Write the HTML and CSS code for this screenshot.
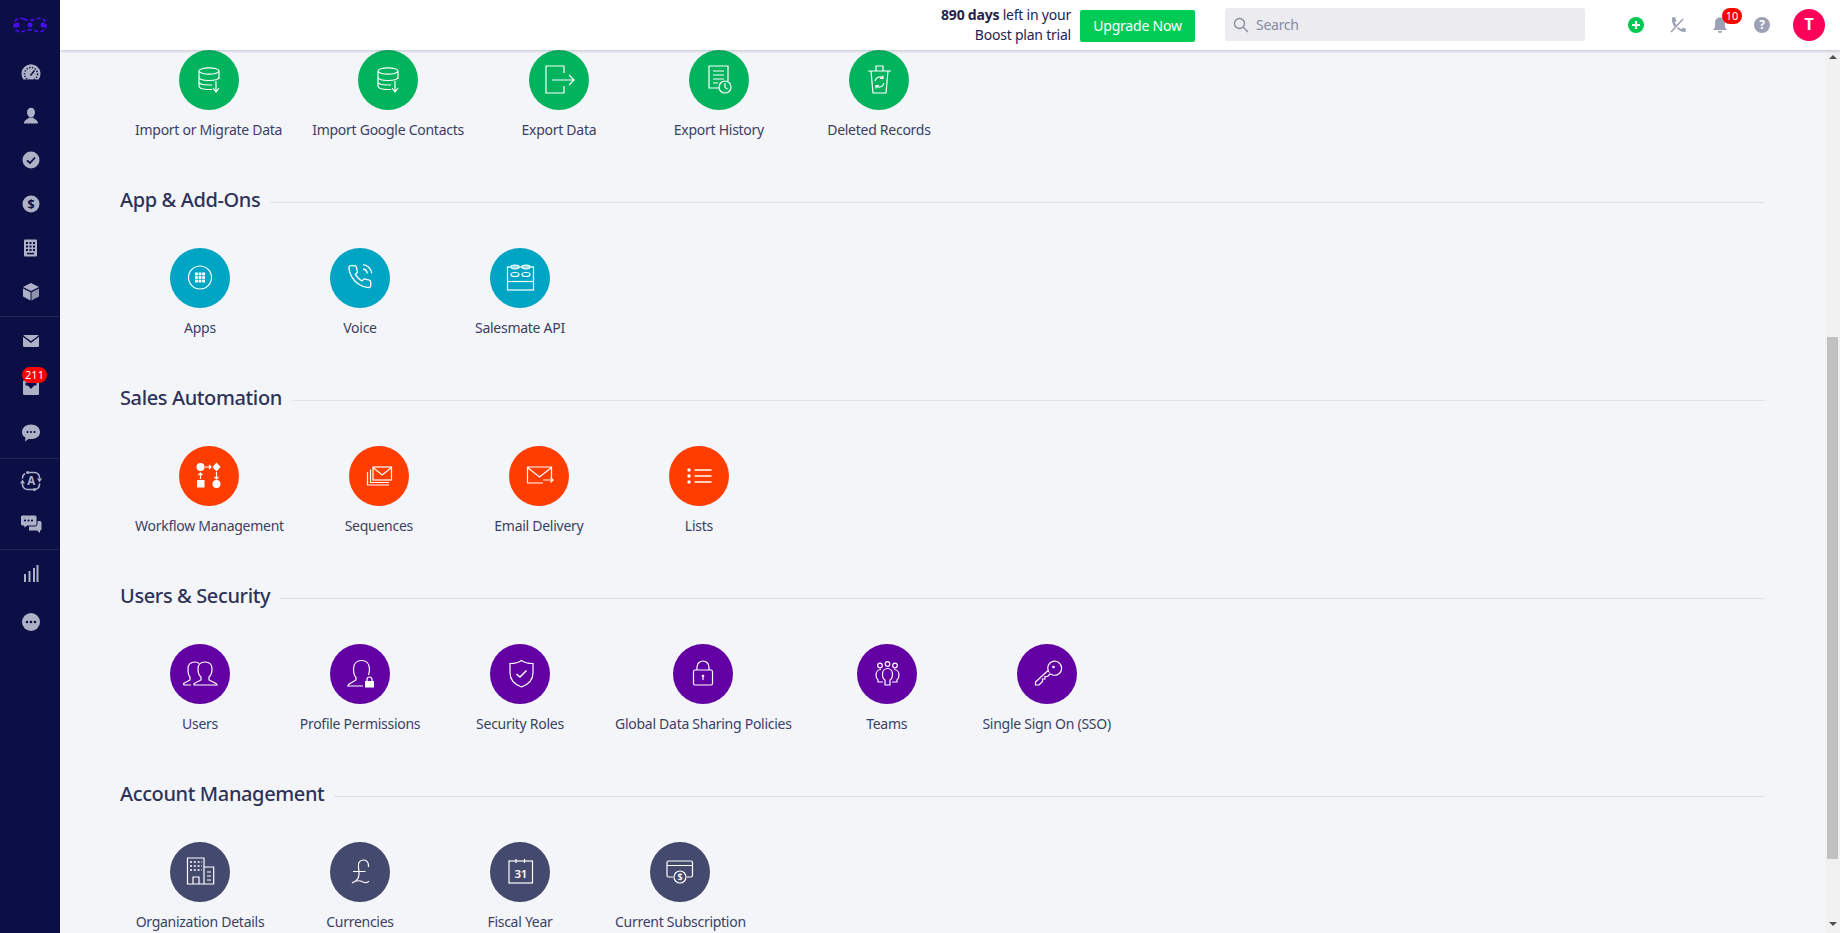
FILE: index.html
```html
<!DOCTYPE html>
<html lang="en">
<head>
    <meta charset="UTF-8">
    <meta name="viewport" content="width=device-width, initial-scale=1.0">
    <title>Setup</title>
    <link rel="stylesheet" href="styles.css">
</head>
<body>
<div class="app">

    <nav class="sidebar">
        <div class="logo">
            <svg width="36" height="20" viewBox="0 0 36 20"><g fill="none" stroke="#4a0df0" stroke-width="1.6" stroke-dasharray="4 2.4"><path d="M12 4 C7 2 2 4 2 10 C2 16 7 18 12 16 C15 14.5 21 14.5 24 16 C29 18 34 16 34 10 C34 4 29 2 24 4 C21 5.500 15 5.500 12 4 Z"/></g><g fill="#4a0df0"><circle cx="5" cy="10" r="2.500"/><circle cx="18" cy="10" r="2.500"/><circle cx="31" cy="10" r="2.500"/></g></svg>
        </div>
        <div class="side-group side-group-main">
            <a class="side-item"><svg width="24" height="24" viewBox="0 0 24 24"><path class="fl" d="M5.500 19.500 A9.500 9.500 0 1 1 20.500 19.500 Z"/><circle cx="13" cy="14" r="6.500" fill="none" stroke="#0c0f45" stroke-width="1.500" stroke-dasharray="1.300 1.500"/><path d="M12.500 15.500 L16.500 10.500" stroke="#0c0f45" stroke-width="1.500"/></svg></a>
            <a class="side-item"><svg width="24" height="24" viewBox="0 0 24 24"><ellipse class="fl" cx="13" cy="8.500" rx="4" ry="4.800"/><path class="fl" d="M6 19.500 C6 16 9.500 15.500 11 13.500 H15 C16.500 15.500 20 16 20 19.500 Z"/></svg></a>
            <a class="side-item"><svg width="24" height="24" viewBox="0 0 24 24"><circle class="fl" cx="13" cy="12" r="8.500"/><path d="M9 12.300 L12 15 L17 9.500" fill="none" stroke="#0c0f45" stroke-width="1.800"/></svg></a>
            <a class="side-item"><svg width="24" height="24" viewBox="0 0 24 24"><circle class="fl" cx="13" cy="12" r="8.500"/><text class="side-glyph" x="13" y="16.500" font-size="12.500">$</text></svg></a>
            <a class="side-item"><svg width="24" height="24" viewBox="0 0 24 24"><rect class="fl" x="6" y="3.500" width="13" height="17" rx="1"/><g fill="#0c0f45"><rect x="8" y="6" width="2" height="2"/><rect x="11.500" y="6" width="2" height="2"/><rect x="15" y="6" width="2" height="2"/><rect x="8" y="9.500" width="2" height="2"/><rect x="11.500" y="9.500" width="2" height="2"/><rect x="15" y="9.500" width="2" height="2"/><rect x="8" y="13" width="2" height="2"/><rect x="11.500" y="13" width="2" height="2"/><rect x="15" y="13" width="2" height="2"/><rect x="9" y="16.800" width="7" height="1.500"/></g></svg></a>
            <a class="side-item"><svg width="24" height="24" viewBox="0 0 24 24"><path class="fl" d="M13 3 L21 7 L13 11 L5 7 Z"/><path class="fl" d="M5 8.500 L12.500 12.300 V20.500 L5 16.500 Z"/><path d="M21 8.500 L13.500 12.300 V20.500 L21 16.500 Z" fill="#8d92ab"/></svg></a>
        </div>
        <div class="side-group side-group-inbox">
            <a class="side-item"><svg width="24" height="24" viewBox="0 0 24 24"><rect class="fl" x="5" y="6" width="16" height="12" rx="1.500"/><path d="M5 7 L13 13 L21 7" fill="none" stroke="#0c0f45" stroke-width="1.400"/></svg></a>
            <a class="side-item"><svg width="24" height="24" viewBox="0 0 24 24"><rect class="fl" x="5" y="5" width="16" height="15" rx="1.500"/><rect x="7.500" y="7.500" width="11" height="3" fill="#0c0f45"/><path d="M9.500 10 H16.500 L13 14 Z" fill="#0c0f45"/></svg><span class="side-badge">211</span></a>
            <a class="side-item"><svg width="24" height="24" viewBox="0 0 24 24"><path class="fl" d="M13 3.500 C18 3.500 22 6.500 22 11 C22 15.500 18 18 13 18 C12 18 11 18 10.500 18 L7 20.500 L7.500 16.500 C5 15.500 4 13.500 4 11 C4 6.500 8 3.500 13 3.500 Z"/><g fill="#0c0f45"><circle cx="9.500" cy="11" r="1.100"/><circle cx="13" cy="11" r="1.100"/><circle cx="16.500" cy="11" r="1.100"/></g></svg></a>
        </div>
        <div class="side-group side-group-chat">
            <a class="side-item"><svg width="24" height="24" viewBox="0 0 24 24"><path class="st" d="M10 3.500 H16.500 A5 5 0 0 1 21.500 8.500 V9.500 M21.500 14.500 V15.500 A5 5 0 0 1 16.500 20.500 H9.500 A5 5 0 0 1 4.500 15.500 V14.500 M4.500 9.500 V8.500 A5 5 0 0 1 7 4.500"/><path class="fl" d="M2 14.500 L4.500 10.500 L7 14.500 Z M19 9.500 L21.500 13.500 L24 9.500 Z"/><circle class="fl" cx="9.500" cy="3.500" r="1.500"/><circle class="fl" cx="16.500" cy="20.500" r="1.500"/><text class="side-glyph side-glyph-light" x="13" y="16" font-size="11.500">A</text></svg></a>
            <a class="side-item"><svg width="24" height="24" viewBox="0 0 24 24"><path class="fl" d="M11 9 H22 a1.500 1.500 0 0 1 1.500 1.500 V17 a1.500 1.500 0 0 1 -1.500 1.500 V21 L19 18.500 H11 Z"/><path d="M4.500 3 H17 a2 2 0 0 1 2 2 V12 a2 2 0 0 1 -2 2 H9 L6 16.500 V14 H4.500 a2 2 0 0 1 -2 -2 V5 a2 2 0 0 1 2 -2 Z" fill="#adb1c6" stroke="#0c0f45"/><g fill="#0c0f45"><circle cx="7" cy="8.500" r="1.100"/><circle cx="10.500" cy="8.500" r="1.100"/><circle cx="14" cy="8.500" r="1.100"/></g></svg></a>
        </div>
        <div class="side-group side-group-last">
            <a class="side-item"><svg width="24" height="24" viewBox="0 0 24 24"><g class="fl"><rect x="6" y="12" width="2" height="8"/><rect x="10.500" y="9" width="2" height="11"/><rect x="15" y="6" width="2" height="14"/><rect x="18.500" y="3" width="2" height="17"/></g></svg></a>
            <a class="side-item"><svg width="24" height="24" viewBox="0 0 24 24"><circle class="fl" cx="13" cy="12" r="9"/><g fill="#0c0f45"><circle cx="9" cy="12" r="1.300"/><circle cx="13" cy="12" r="1.300"/><circle cx="17" cy="12" r="1.300"/></g></svg></a>
        </div>
    </nav>

    <div class="main">
        <header class="topbar">
            <div class="trial"><strong>890 days</strong> left in your<br>Boost plan trial</div>
            <button class="upgrade">Upgrade Now</button>
            <div class="search">
                <svg width="16" height="16" viewBox="0 0 16 16" fill="none" stroke="#868b9f" stroke-width="1.300"><circle cx="6.500" cy="6.500" r="5"/><path d="M10.200 10.200 L15 15"/></svg>
                <span>Search</span>
            </div>
            <div class="top-icon"><svg width="18" height="18" viewBox="0 0 18 18"><circle cx="9" cy="9" r="8" fill="#00c853"/><path d="M9 5 V13 M5 9 H13" stroke="#fff" stroke-width="2.200"/></svg></div>
            <div class="top-icon"><svg width="18" height="18" viewBox="0 0 18 18" fill="#9ca1b5"><path d="M14 3 L2 16" stroke="#9ca1b5" stroke-width="1.500"/><path d="M3 1.500 L6 1 L7.500 5 L5.800 6 C6 7 6.500 8 7.500 9 L5.500 11 C3.500 8 2.500 5 3 1.500 Z"/><path d="M9 11 C10.500 12.500 12 13 13 13 L14 11.500 L17 13 L16.500 16 C13 16.500 10.500 14.500 8 12.500 Z"/></svg></div>
            <div class="top-icon"><svg width="18" height="18" viewBox="0 0 18 18"><path d="M9 1.500 C12.500 1.500 14 4 14 7 V11 L16 14 H2 L4 11 V7 C4 4 5.500 1.500 9 1.500 Z" fill="#9ca1b5"/><path d="M7 15 H11 C11 17.500 7 17.500 7 15 Z" fill="#9ca1b5"/></svg><span class="top-badge">10</span></div>
            <div class="top-icon"><span class="help">?</span></div>
            <div class="avatar">T</div>
        </header>

        <div class="workspace">
            <div class="content">

                <section class="section">
                    <div class="tiles">
                        <a class="tile"><span class="disc disc-green"><svg class="ic" viewBox="0 0 60 60"><ellipse cx="30" cy="21" rx="10" ry="3.200"/><path d="M20 21 V36 C20 38 24 39.500 30 39.500 H33 M40 21 V29 M20 27 C20 29.500 25 30.500 30 30.500 C35 30.500 40 29.500 40 27 M20 32 C20 34 24 35 30 35 H33"/><path d="M37 31 V41 M34 38 L37 42 L40 38"/></svg></span><span class="tile-name">Import or Migrate Data</span></a>
                        <a class="tile"><span class="disc disc-green"><svg class="ic" viewBox="0 0 60 60"><ellipse cx="30" cy="21" rx="10" ry="3.200"/><path d="M20 21 V36 C20 38 24 39.500 30 39.500 H33 M40 21 V29 M20 27 C20 29.500 25 30.500 30 30.500 C35 30.500 40 29.500 40 27 M20 32 C20 34 24 35 30 35 H33"/><path d="M37 31 V41 M34 38 L37 42 L40 38"/></svg></span><span class="tile-name">Import Google Contacts</span></a>
                        <a class="tile"><span class="disc disc-green"><svg class="ic" viewBox="0 0 60 60"><path d="M35 23 V16 H17 V43 H35 V36 M23 30 H44 M40 25 L45 30 L40 35"/></svg></span><span class="tile-name">Export Data</span></a>
                        <a class="tile"><span class="disc disc-green"><svg class="ic" viewBox="0 0 60 60"><path d="M30 38 H20 V16 H39 V31 M24 21 H35 M24 25 H35 M24 29 H35 M24 33 H29"/><circle cx="36" cy="37" r="6"/><path d="M36 33 V37.500 L38.500 39"/></svg></span><span class="tile-name">Export History</span></a>
                        <a class="tile"><span class="disc disc-green"><svg class="ic" viewBox="0 0 60 60"><path d="M19 21 H42 M22 21 L24 43 H37 L39 21 M27 21 V16 H34 V21"/><path d="M26 31 A5 5 0 0 1 34 28 M34 25.500 V28.500 H31 M35 33 A5 5 0 0 1 27 36 M27 38.500 V35.500 H30"/></svg></span><span class="tile-name">Deleted Records</span></a>
                    </div>
                </section>

                <section class="section">
                    <h2 class="section-title"><span>App &amp; Add-Ons</span></h2>
                    <div class="tiles">
                        <a class="tile"><span class="disc disc-teal"><svg class="ic" viewBox="0 0 60 60"><circle cx="30" cy="29.500" r="11.500"/><g fill="#fff" stroke="none"><rect x="25" y="24.500" width="2.800" height="2.800"/><rect x="28.600" y="24.500" width="2.800" height="2.800"/><rect x="32.200" y="24.500" width="2.800" height="2.800"/><rect x="25" y="28.100" width="2.800" height="2.800"/><rect x="28.600" y="28.100" width="2.800" height="2.800"/><rect x="32.200" y="28.100" width="2.800" height="2.800"/><rect x="25" y="31.700" width="2.800" height="2.800"/><rect x="28.600" y="31.700" width="2.800" height="2.800"/><rect x="32.200" y="31.700" width="2.800" height="2.800"/></g></svg></span><span class="tile-name">Apps</span></a>
                        <a class="tile"><span class="disc disc-teal"><svg class="ic" viewBox="0 0 60 60"><g transform="translate(16.500 15.500) scale(1.100)"><path d="M22 16.920v3a2 2 0 0 1-2.180 2 19.790 19.790 0 0 1-8.630-3.070 19.500 19.500 0 0 1-6-6 19.790 19.790 0 0 1-3.070-8.670A2 2 0 0 1 4.110 2h3a2 2 0 0 1 2 1.720 12.840 12.840 0 0 0 .7 2.810 2 2 0 0 1-.45 2.110L8.090 9.910a16 16 0 0 0 6 6l1.270-1.270a2 2 0 0 1 2.110-.45 12.840 12.840 0 0 0 2.810.7A2 2 0 0 1 22 16.920z"/><path d="M15.050 5A5 5 0 0 1 19 8.950M15.050 1A9 9 0 0 1 23 8.940"/></g></svg></span><span class="tile-name">Voice</span></a>
                        <a class="tile"><span class="disc disc-teal"><svg class="ic" viewBox="0 0 60 60"><rect x="17.500" y="19" width="26" height="23"/><path d="M17.500 33.500 H43.500"/><ellipse cx="25" cy="19" rx="4" ry="1.800"/><ellipse cx="36" cy="19" rx="4" ry="1.800"/><ellipse cx="25" cy="26.500" rx="4" ry="2"/><ellipse cx="36" cy="26.500" rx="4" ry="2"/></svg></span><span class="tile-name">Salesmate API</span></a>
                    </div>
                </section>

                <section class="section">
                    <h2 class="section-title"><span>Sales Automation</span></h2>
                    <div class="tiles">
                        <a class="tile"><span class="disc disc-orange"><svg class="ic" viewBox="0 0 60 60"><g fill="#fff" stroke="none"><circle cx="21.500" cy="21" r="4"/><path d="M37.500 16.500 L41.500 21 L37.500 25.500 L33.500 21 Z"/><circle cx="37.500" cy="38" r="4"/><rect x="18" y="34" width="7.500" height="7.500"/></g><path d="M26 21 H32 M30 19 L32 21 L30 23 M37.500 26 V33 M35.500 31 L37.500 33 L39.500 31 M21.500 33 V27 M19.500 29 L21.500 27 L23.500 29"/></svg></span><span class="tile-name">Workflow Management</span></a>
                        <a class="tile"><span class="disc disc-orange"><svg class="ic" viewBox="0 0 60 60"><rect x="24" y="21" width="18.500" height="13"/><path d="M24 21.500 L33.200 29 L42.500 21.500 M21.500 23.500 V36.500 H40 M18.500 26 V39 H40"/></svg></span><span class="tile-name">Sequences</span></a>
                        <a class="tile"><span class="disc disc-orange"><svg class="ic" viewBox="0 0 60 60"><path d="M34 37 H18.500 V21 H42.500 V32 M18.500 21.500 L30.500 31 L42.500 21.500 M34 34 H44 M41.500 31.500 L44 34 L41.500 36.500"/></svg></span><span class="tile-name">Email Delivery</span></a>
                        <a class="tile"><span class="disc disc-orange"><svg class="ic" viewBox="0 0 60 60"><g fill="#fff" stroke="none"><circle cx="20" cy="24" r="1.700"/><circle cx="20" cy="30" r="1.700"/><circle cx="20" cy="36" r="1.700"/></g><path d="M25.500 24 H42.500 M25.500 30 H42.500 M25.500 36 H42.500" stroke-width="1.500"/></svg></span><span class="tile-name">Lists</span></a>
                    </div>
                </section>

                <section class="section">
                    <h2 class="section-title"><span>Users &amp; Security</span></h2>
                    <div class="tiles">
                        <a class="tile"><span class="disc disc-purple"><svg class="ic" viewBox="0 0 60 60"><path d="M24 41 H47 L46 39.500 L39 36 V33 C41.500 31 42 28 42 25 C42 20 39 18 35 18 C31 18 28 20 28 25 C28 28 28.500 31 31 33 V36 L24 39.500 Z"/><path d="M21 41 H14 L13.500 39.500 L20 36 V33 C18 31 18 28 18 25 C18 20 21 18 25 18 C26.500 18 28 18.500 29 19.500"/></svg></span><span class="tile-name">Users</span></a>
                        <a class="tile"><span class="disc disc-purple"><svg class="ic" viewBox="0 0 60 60"><path d="M33 42 H18 L18.500 40.500 L26 36 V33.500 C24 31.500 23.500 28.500 23.500 25 C23.500 19.500 27 16.500 31.500 16.500 C36 16.500 39.500 19.500 39.500 25 C39.500 27.500 39 29.500 38.500 31"/><rect x="35" y="37" width="9" height="6.500" fill="#fff" stroke="none"/><path d="M37 37 V35.500 A2.500 2.500 0 0 1 42 35.500 V37"/></svg></span><span class="tile-name">Profile Permissions</span></a>
                        <a class="tile"><span class="disc disc-purple"><svg class="ic" viewBox="0 0 60 60"><path d="M31.500 16.500 C34 18.500 38 19.500 43 19.500 V29 C43 36 38 40.500 31.500 43 C25 40.500 20 36 20 29 V19.500 C25 19.500 29 18.500 31.500 16.500 Z"/><path d="M26.500 30 L30 33 L36.500 26.500" stroke-width="1.500"/></svg></span><span class="tile-name">Security Roles</span></a>
                        <a class="tile"><span class="disc disc-purple"><svg class="ic" viewBox="0 0 60 60"><rect x="20.500" y="26" width="19" height="15" rx="1.500"/><path d="M24 26 V23 A6 6 0 0 1 36 23 V26"/><circle cx="30" cy="32" r="1.300" fill="#fff" stroke="none"/><path d="M30 32 V36"/></svg></span><span class="tile-name">Global Data Sharing Policies</span></a>
                        <a class="tile"><span class="disc disc-purple"><svg class="ic" viewBox="0 0 60 60"><circle cx="23" cy="21.500" r="2.300"/><circle cx="30.500" cy="20" r="2.300"/><circle cx="38" cy="21.500" r="2.300"/><path d="M28 41 V36 C26 35 25.500 33 25.500 30 C25.500 26.500 28 24.500 30.500 24.500 C33 24.500 35.500 26.500 35.500 30 C35.500 33 35 35 33 36 V41 Z"/><path d="M24 25.500 C21 25.500 19 28 19 31 C19 33 20 35 21 36 V38 H26 M37 25.500 C40 25.500 42 28 42 31 C42 33 41 35 40 36 V38 H35"/></svg></span><span class="tile-name">Teams</span></a>
                        <a class="tile"><span class="disc disc-purple"><svg class="ic" viewBox="0 0 60 60"><path d="M31.500 27.500 A7 7 0 1 1 36 31 L33 30 L30.500 32.500 H28 V35 H25.500 V37.500 L22 41 H18.500 V38 L30.500 27 Z"/><circle cx="36.500" cy="23" r="1.300" fill="#fff" stroke="none"/></svg></span><span class="tile-name">Single Sign On (SSO)</span></a>
                    </div>
                </section>

                <section class="section">
                    <h2 class="section-title"><span>Account Management</span></h2>
                    <div class="tiles">
                        <a class="tile"><span class="disc disc-slate"><svg class="ic" viewBox="0 0 60 60"><path d="M17.500 42 V16 H34 V42 Z M34 25 H43.700 V42 H34 M23 42 V35 H29 V42 M37 30 H41 M37 34 H41 M37 38 H41"/><path d="M20 20 H32 M20 24 H32 M20 28 H32" stroke-dasharray="2 1.800" stroke-width="1.500"/></svg></span><span class="tile-name">Organization Details</span></a>
                        <a class="tile"><span class="disc disc-slate"><svg class="ic" viewBox="0 0 60 60"><path d="M38.500 25 C39 21 37 18 33.500 18 C29 18 28 21.500 28.500 25.500 C29 30 30 34 27.500 37 C26 39 24 40 22 41 C26 38 30 38.500 33 40 C35.500 41 37.500 41 39 39 M23 29.500 H35.500"/></svg></span><span class="tile-name">Currencies</span></a>
                        <a class="tile"><span class="disc disc-slate"><svg class="ic" viewBox="0 0 60 60"><rect x="19" y="19" width="23.500" height="22"/><path d="M26 17 V21 M34.500 17 V21"/><text class="ic-text" x="30.700" y="36" font-size="11.500">31</text></svg></span><span class="tile-name">Fiscal Year</span></a>
                        <a class="tile"><span class="disc disc-slate"><svg class="ic" viewBox="0 0 60 60"><path d="M23 35 H18.500 A1.500 1.500 0 0 1 17 33.500 V20.500 A1.500 1.500 0 0 1 18.500 19 H41 A1.500 1.500 0 0 1 42.500 20.500 V33.500 A1.500 1.500 0 0 1 41 35 H37 M17 23.500 H42.500"/><circle cx="30" cy="35" r="6"/><text class="ic-text" x="30" y="38.300" font-size="9">$</text></svg></span><span class="tile-name">Current Subscription</span></a>
                    </div>
                </section>

            </div>
            <div class="scrollbar">
                <span class="arrow-up"></span>
                <span class="thumb"></span>
                <span class="arrow-down"></span>
            </div>
        </div>
    </div>
</div>
</body>
</html>
```

FILE: styles.css
```css
* {
    box-sizing: border-box;
}

body {
    margin: 0;
    background-color: #f4f5f8;
    color: #3a3f66;
    font-family: "Noto Sans", "Open Sans", sans-serif;
    font-size: 14px;
    line-height: 20px;
    letter-spacing: -0.27px;
}

.app {
    display: flex;
    height: 100vh;
    overflow: hidden;
}

/* left nav */
.sidebar {
    flex: 0 0 60px;
    background-color: #0c0f45;
}

.logo {
    height: 50px;
    display: flex;
    align-items: center;
    justify-content: center;
}

.side-group {
    border-bottom: 1px solid #24285b;
    margin-right: 1px;
}

.side-group-main {
    padding-bottom: 2px;
}

.side-group-inbox {
    padding: 1px 0 2px;
}

.side-group-inbox .side-item {
    height: 46px;
}

.side-group-chat {
    padding-bottom: 4px;
}

.side-group-chat .side-item {
    height: 43px;
}

.side-group-last {
    border-bottom: none;
}

.side-group-last .side-item {
    height: 48px;
}

.side-item {
    position: relative;
    height: 44px;
    display: flex;
    align-items: center;
    justify-content: center;
}

.side-item .fl {
    fill: #adb1c6;
}

.side-item .st {
    fill: none;
    stroke: #adb1c6;
    stroke-width: 1.6;
}

.side-glyph {
    fill: #0c0f45;
    font-weight: 700;
    text-anchor: middle;
}

.side-item .side-glyph-light {
    fill: #adb1c6;
}

.side-badge {
    position: absolute;
    left: 22px;
    top: 3px;
    width: 25px;
    height: 16px;
    border-radius: 8px;
    background-color: #f00;
    color: #fff;
    font-size: 11px;
    line-height: 16px;
    letter-spacing: 0;
    text-align: center;
}

/* top bar */
.main {
    flex: 1;
    min-width: 0;
    display: flex;
    flex-direction: column;
}

.topbar {
    position: relative;
    z-index: 2;
    flex: 0 0 50px;
    display: flex;
    align-items: center;
    justify-content: flex-end;
    padding-right: 15px;
    background-color: #fff;
    box-shadow: 0 1px 3px rgba(40, 44, 90, .25);
}

.trial {
    text-align: right;
    color: #1f2350;
    letter-spacing: -0.22px;
}

.upgrade {
    width: 115px;
    height: 32px;
    margin: 1px 30px 0 9px;
    padding: 0;
    border: none;
    border-radius: 2px;
    background-color: #00cc55;
    color: #fff;
    font-family: inherit;
    font-size: 14px;
    letter-spacing: -0.2px;
}

.search {
    width: 360px;
    height: 33px;
    margin: 0 30px 1px 0;
    padding-left: 8px;
    display: flex;
    align-items: center;
    gap: 7px;
    border-radius: 3px;
    background-color: #ebebf0;
    color: #868b9f;
}

.top-icon {
    position: relative;
    width: 42px;
    display: flex;
    justify-content: center;
}

.top-badge {
    position: absolute;
    left: 23px;
    top: -8px;
    width: 20px;
    height: 16px;
    border-radius: 8px;
    background-color: #f00;
    color: #fff;
    font-size: 11px;
    line-height: 16px;
    letter-spacing: 0;
    text-align: center;
}

.help {
    width: 16px;
    height: 16px;
    border-radius: 50%;
    background-color: #9ca1b5;
    color: #fff;
    font-size: 12px;
    font-weight: 700;
    line-height: 16px;
    text-align: center;
}

.avatar {
    width: 32px;
    height: 32px;
    margin-left: 10px;
    border-radius: 50%;
    background-color: #ff0058;
    color: #fff;
    font-size: 16px;
    font-weight: 700;
    line-height: 30px;
    text-align: center;
}

/* settings grid */
.workspace {
    flex: 1;
    min-height: 0;
    display: flex;
}

.content {
    flex: 1;
    min-width: 0;
    overflow: hidden;
    padding: 0 60px;
}

.section {
    margin-bottom: 46px;
}

.section-title {
    display: flex;
    align-items: center;
    gap: 10px;
    height: 28px;
    margin: 0 0 34px;
    color: #2d3259;
    font-size: 20px;
    font-weight: 500;
    line-height: 28px;
    letter-spacing: -0.38px;
}

.section-title::after {
    content: "";
    flex: 1;
    height: 1px;
    margin-top: 4px;
    background-color: #dfe1e6;
}

.tiles {
    display: flex;
}

.tile {
    min-width: 160px;
    padding: 0 15px;
    display: flex;
    flex-direction: column;
    align-items: center;
    gap: 10px;
}

.tile-name {
    white-space: nowrap;
}

.disc {
    width: 60px;
    height: 60px;
    border-radius: 50%;
}

.disc-green {
    background-color: #00b35c;
}

.disc-teal {
    background-color: #00a5c4;
}

.disc-orange {
    background-color: #ff3d00;
}

.disc-purple {
    background-color: #6200a3;
}

.disc-slate {
    background-color: #44496e;
}

.ic {
    display: block;
    width: 60px;
    height: 60px;
    fill: none;
    stroke: #fff;
    stroke-width: 1.2;
}

.ic-text {
    fill: #fff;
    stroke: none;
    font-weight: 600;
    text-anchor: middle;
}

/* scrollbar */
.scrollbar {
    flex: 0 0 15px;
    display: flex;
    flex-direction: column;
    align-items: center;
    background-color: #f1f1f1;
}

.thumb {
    width: 11px;
    height: 522px;
    margin-top: 278px;
    background-color: #c1c1c1;
}

.arrow-up,
.arrow-down {
    width: 0;
    height: 0;
    border-left: 4px solid transparent;
    border-right: 4px solid transparent;
}

.arrow-up {
    margin-top: 5px;
    border-bottom: 4px solid #505050;
}

.arrow-down {
    margin-top: 63px;
    border-top: 4px solid #505050;
}
```
